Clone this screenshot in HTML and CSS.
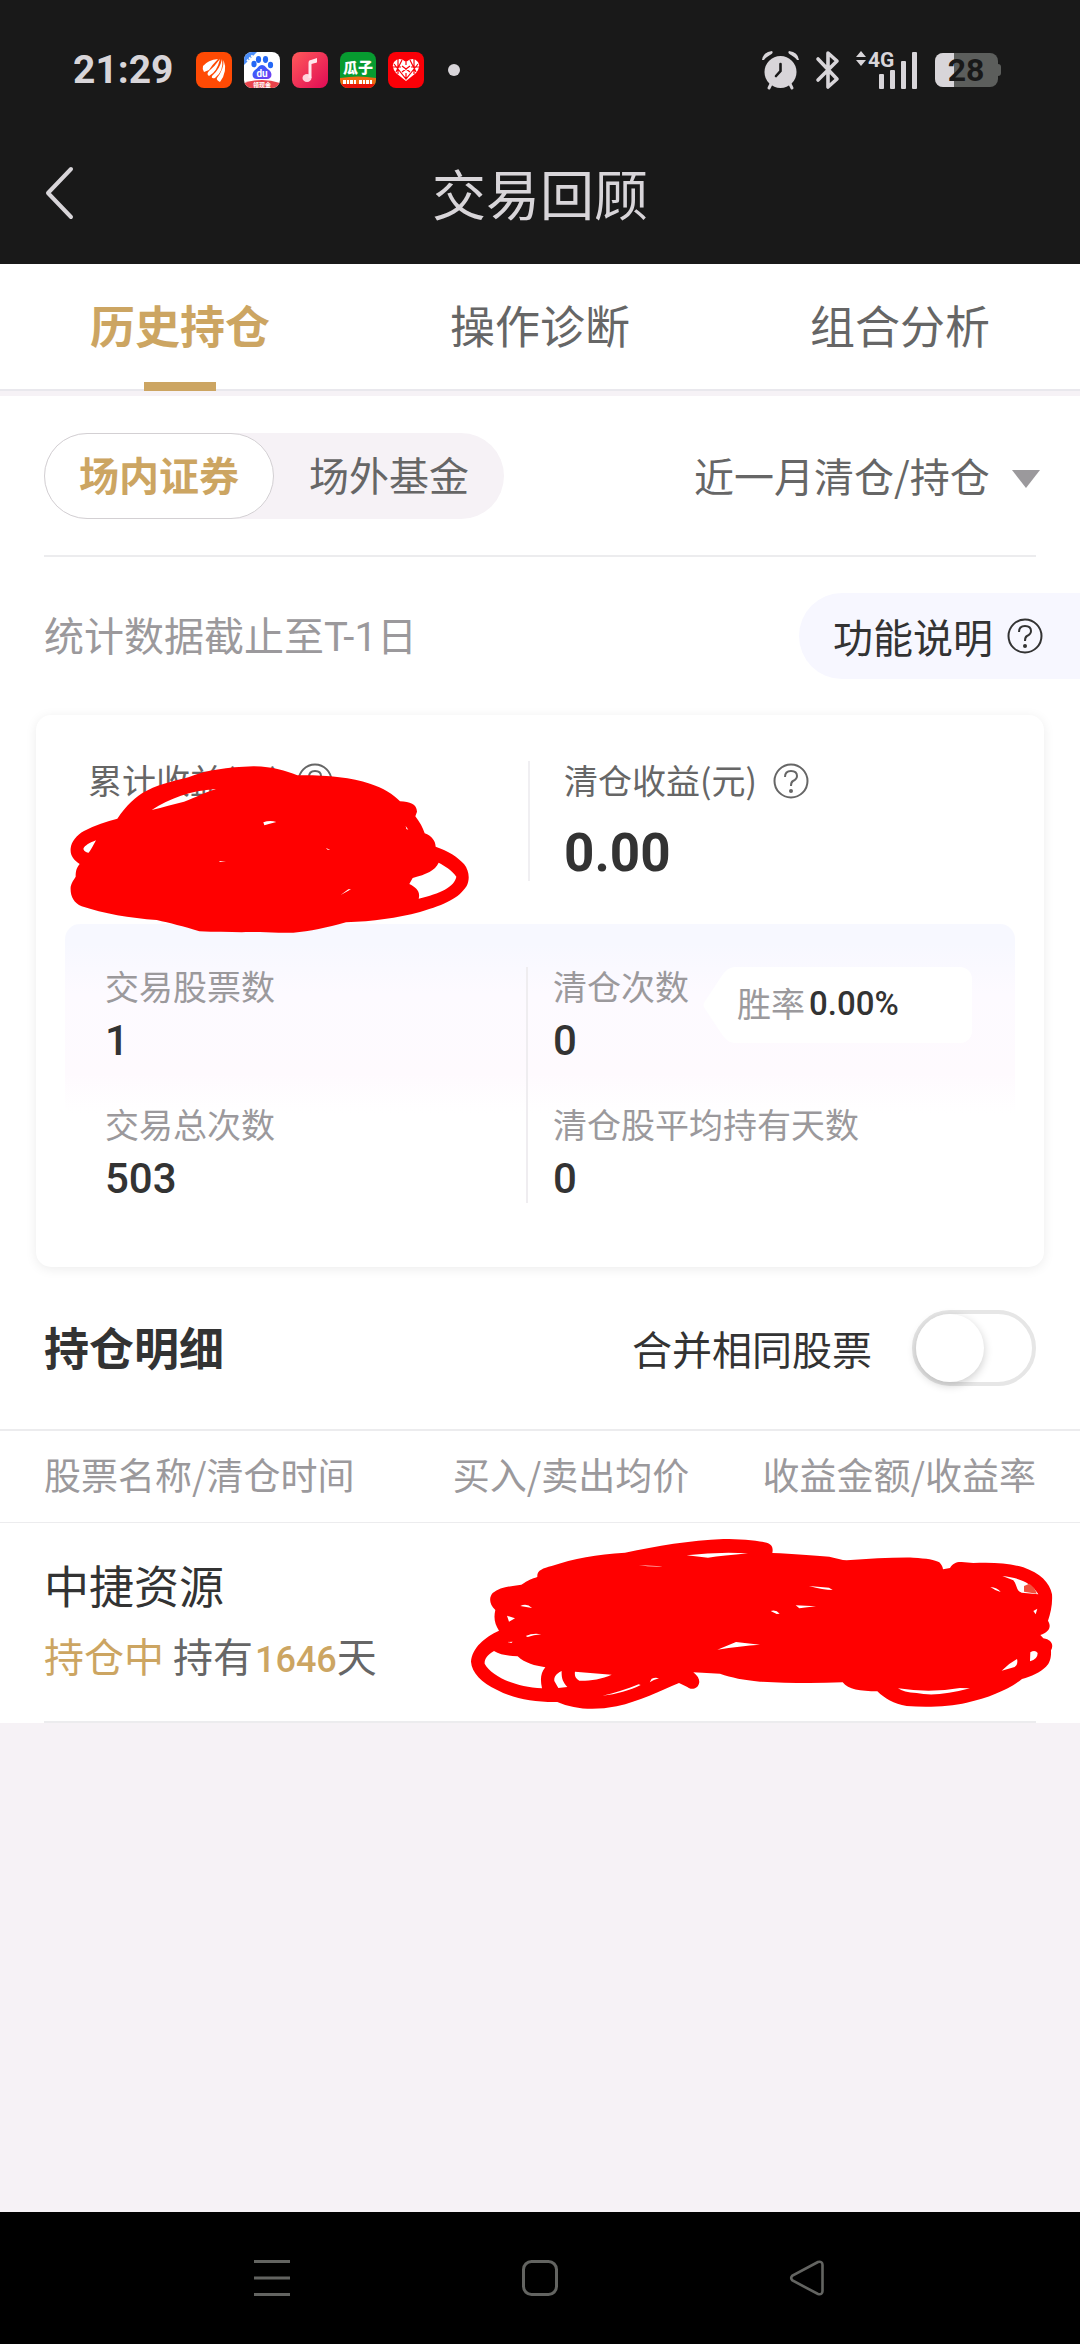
FILE: index.html
```html
<!DOCTYPE html>
<html lang="zh-CN">
<head>
<meta charset="utf-8">
<meta name="viewport" content="width=device-width, initial-scale=1">
<title>交易回顾</title>
<link rel="stylesheet" href="styles.css">
</head>
<body>
<div class="app">
  <header class="header">
    <div class="status">
      <span class="clock">21:29</span>
      <div class="apps">
        <svg class="app-icon" viewBox="0 0 36 36"><rect width="36" height="36" rx="8" fill="#ff4a04"/><g fill="#fff"><path d="M7 14Q12 8 22 7Q16 13 13 18L8 20Q6 17 7 14Z"/><path d="M24 7Q21 20 13 24Q10 22 13 19Q19 14 24 7Z"/><path d="M26 7Q28 19 19 26Q15 27 16 24Q24 17 26 7Z"/><path d="M27.500 8Q32 19 24 30Q20 28 21 26Q28 17 27.500 8Z"/></g></svg>
        <svg class="app-icon" viewBox="0 0 36 36"><defs><linearGradient id="paw" x1="0" y1="0" x2="1" y2="1"><stop offset="0" stop-color="#1f6bff"/><stop offset="1" stop-color="#7a3bf0"/></linearGradient><clipPath id="tile"><rect width="36" height="36" rx="8"/></clipPath></defs><g clip-path="url(#tile)"><rect width="36" height="36" fill="#fff"/><path d="M0 0H13L0 13Z" fill="#4a8df8"/><path d="M3 9L9 3" stroke="#fff" stroke-width="2" stroke-dasharray="2 1"/><g fill="#2468f5"><ellipse cx="10" cy="12" rx="2.600" ry="3.300"/><ellipse cx="14.500" cy="7.500" rx="2.600" ry="3.400"/><ellipse cx="21.500" cy="7.500" rx="2.600" ry="3.400"/><ellipse cx="26.500" cy="13" rx="2.600" ry="3.300"/></g><path d="M18 13C21 13 22 16 25 18C29 21 28 27 23 27H13C8 27 7 21 11 18C14 16 15 13 18 13Z" fill="url(#paw)"/><text x="18" y="25" font-family="Roboto, sans-serif" font-size="10" font-weight="700" fill="#fff" text-anchor="middle">du</text><path d="M0 31Q18 25 36 31V36H0Z" fill="#e9434b"/><text x="18" y="35" font-family="Noto Sans CJK SC, sans-serif" font-size="6" font-weight="700" fill="#fff" text-anchor="middle">领现金</text></g></svg>
        <svg class="app-icon" viewBox="0 0 36 36"><defs><linearGradient id="music" x1="0" y1="0" x2="1" y2="1"><stop offset="0" stop-color="#ff5a5a"/><stop offset="1" stop-color="#e00a55"/></linearGradient></defs><rect width="36" height="36" rx="8" fill="url(#music)"/><ellipse cx="15" cy="26" rx="4.500" ry="4" fill="#ffd3dc"/><path d="M16.500 26V11Q16.500 8 19 8L25 6V10Q25 11 23 11L19.500 12V26Z" fill="#ffe6ec"/></svg>
        <svg class="app-icon" viewBox="0 0 36 36"><g clip-path="url(#tile)"><rect width="36" height="36" fill="#079b30"/><path d="M0 26Q18 23 36 26V36H0Z" fill="#f06a12"/><path d="M0 32H36V36H0Z" fill="#e8140c"/><text x="18" y="21" font-family="Noto Sans CJK SC, sans-serif" font-size="15" font-weight="900" fill="#fff" text-anchor="middle">瓜子</text><path d="M3 30H17M19 30H33" stroke="#fff" stroke-width="4" stroke-dasharray="3 1 2 1"/></g></svg>
        <svg class="app-icon" viewBox="0 0 36 36"><rect width="36" height="36" rx="8" fill="#fb0007"/><path d="M18 29L8 21Q3 15 6 10Q11 4 18 10Q25 4 30 10Q33 15 28 21Z" fill="#fff"/><path d="M6 12L18 27L30 12M5 15H13M23 15H31M10 7V22M26 7V22M14 8L8 20M22 8L28 20M14 14L22 20M22 14L14 20M18 10V13M18 21V28" fill="none" stroke="#fb0007" stroke-width="1.200"/></svg>
      </div>
      <span class="more-dot"></span>
      <div class="system">
        <svg width="37" height="38" viewBox="0 0 37 38"><g fill="#d8d5d9"><circle cx="18.500" cy="21" r="16"/><path d="M0 9Q1 1 10 0Q12 2 8 4Q3 7 2 9ZM37 9Q36 1 27 0Q25 2 29 4Q34 7 35 9Z"/></g><path d="M9 33L7 37M28 33L30 37" stroke="#d8d5d9" stroke-width="3" stroke-linecap="round"/><path d="M18.500 13V20L14 25" fill="none" stroke="#191919" stroke-width="2.600" stroke-linecap="round"/></svg>
        <svg width="23" height="38" viewBox="0 0 23 38"><path d="M2 8L21 28L12 36V2L21 10L2 29" fill="none" stroke="#d8d5d9" stroke-width="3.600" stroke-linecap="round" stroke-linejoin="round"/></svg>
        <svg width="62" height="38" viewBox="0 0 62 38"><g fill="#d8d5d9"><path d="M0 6L5 0L10 6ZM0 9H10L5 15Z"/><rect x="23" y="23" width="5" height="15" rx="1"/><rect x="34" y="19" width="5" height="19" rx="1"/><rect x="45" y="10" width="5" height="28" rx="1"/><rect x="56" y="1" width="5" height="37" rx="1"/><text x="12" y="16" font-family="Roboto, sans-serif" font-size="21" font-weight="700">4G</text></g></svg>
        <svg width="67" height="34" viewBox="0 0 67 34"><defs><clipPath id="cell"><rect width="63" height="34" rx="8"/></clipPath></defs><g clip-path="url(#cell)"><rect width="63" height="34" fill="#5c5e5c"/><rect width="19" height="34" fill="#d8d5d9"/></g><path d="M63 11Q66 11 66 14V20Q66 23 63 23Z" fill="#5c5e5c"/><text x="31" y="28" font-family="Roboto, sans-serif" font-size="32" font-weight="700" fill="#191919" text-anchor="middle">28</text></svg>
      </div>
    </div>
    <div class="titlebar">
      <button class="back" type="button" aria-label="返回"><svg width="30" height="52" viewBox="0 0 30 52"><path d="M26 2L3 26L26 50" fill="none" stroke="#d8d5d9" stroke-width="4" stroke-linecap="round" stroke-linejoin="round"/></svg></button>
      <h1 class="title">交易回顾</h1>
    </div>
  </header>

  <nav class="tabs">
    <a class="tab tab-active" href="#history">历史持仓</a>
    <a class="tab" href="#diagnose">操作诊断</a>
    <a class="tab" href="#portfolio">组合分析</a>
  </nav>

  <main class="main" id="history">
    <section class="sheet">
      <div class="filters">
        <div class="segmented">
          <button class="segment segment-active" type="button">场内证券</button>
          <button class="segment" type="button">场外基金</button>
        </div>
        <div class="period">
          <select class="period-select" aria-label="统计区间"><option>近一月清仓/持仓</option></select>
          <svg class="caret" width="28" height="18" viewBox="0 0 28 18"><path d="M0 0H28L14 18Z" fill="#9b999c"/></svg>
        </div>
      </div>
      <hr class="divider">

      <div class="notice">
        <p class="notice-text">统计数据截止至<span class="latin">T-1</span>日</p>
        <button class="guide" type="button">功能说明
          <svg class="help" viewBox="0 0 36 36"><circle cx="18" cy="18" r="16.500"/><path d="M12 14Q12 8 18 8Q24 8 24 13Q24 16 20 18Q18 19 18 23"/><circle class="help-dot" cx="18" cy="28" r="2"/></svg>
        </button>
      </div>

      <section class="card">
        <div class="metrics">
          <div class="metric">
            <div class="metric-label"><span class="metric-name">累计收益(元)</span>
              <svg class="help" viewBox="0 0 36 36"><circle cx="18" cy="18" r="16.500"/><path d="M12 14Q12 8 18 8Q24 8 24 13Q24 16 20 18Q18 19 18 23"/><circle class="help-dot" cx="18" cy="28" r="2"/></svg>
            </div>
            <svg class="scribble scribble-profit" viewBox="0 0 1260 600"><path fill="#f00" fill-rule="evenodd" d="M172 206C200 165 225 140 260 122C310 98 350 92 385 82C440 60 500 52 580 49C640 50 675 62 712 76C800 75 870 82 930 101C970 114 1000 132 1020 154C1050 155 1070 162 1071 185L1066 199C1080 218 1088 232 1094 250C1115 258 1126 272 1127 290C1165 303 1192 320 1212 342C1228 362 1230 388 1220 408C1195 445 1160 462 1080 486C1010 504 940 514 858 517C800 533 750 545 700 548C660 550 630 546 600 546C560 547 490 547 418 544C370 529 330 519 290 510C210 505 130 491 65 469C40 459 30 437 32 410C34 398 42 388 47 380C47 360 51 352 59 342C40 330 30 316 32 295C34 275 50 255 72 243C105 225 140 214 172 206ZM275 180C330 145 390 122 468 117C430 128 410 142 372 155C340 163 310 171 275 180ZM108 271C90 278 74 286 70 297C73 305 80 308 86 308C94 299 100 285 108 271ZM610 217Q630 210 649 216Q633 220 613 226ZM1136 338C1155 348 1175 360 1189 380C1184 410 1140 431 1076 446C1082 424 1068 412 1048 402L1058 384C1100 372 1125 362 1136 338ZM1037 228L1045 239L1039 237ZM477 333L498 335L480 336ZM797 294L811 299L803 299ZM842 435L865 418L873 418Z"/></svg>
          </div>
          <div class="metric metric-split">
            <div class="metric-label"><span class="metric-name">清仓收益(元)</span>
              <svg class="help" viewBox="0 0 36 36"><circle cx="18" cy="18" r="16.500"/><path d="M12 14Q12 8 18 8Q24 8 24 13Q24 16 20 18Q18 19 18 23"/><circle class="help-dot" cx="18" cy="28" r="2"/></svg>
            </div>
            <div class="metric-value">0.00</div>
          </div>
        </div>

        <div class="panel">
          <div class="stats">
            <div class="stat"><span class="stat-label">交易股票数</span><span class="stat-value">1</span></div>
            <div class="stat"><span class="stat-label">交易总次数</span><span class="stat-value">503</span></div>
          </div>
          <div class="stats stats-split">
            <div class="stat-row">
              <div class="stat"><span class="stat-label">清仓次数</span><span class="stat-value">0</span></div>
              <div class="rate">
                <svg class="rate-tip" width="34" height="76" viewBox="0 0 34 76"><path d="M34 0C22 0 20 8 14 16L2 34Q-1 38 2 42L14 60C20 68 22 76 34 76Z" fill="#fff"/></svg>
                <div class="rate-body"><span class="stat-label">胜率</span><span class="rate-value">0.00%</span></div>
              </div>
            </div>
            <div class="stat"><span class="stat-label">清仓股平均持有天数</span><span class="stat-value">0</span></div>
          </div>
        </div>
      </section>

      <div class="section-head">
        <h2 class="section-title">持仓明细</h2>
        <label class="merge" for="merge">合并相同股票
          <input class="switch" id="merge" type="checkbox" role="switch">
        </label>
      </div>

      <table class="holdings">
        <thead>
          <tr><th class="col-name">股票名称/清仓时间</th><th class="col-price">买入/卖出均价</th><th class="col-profit">收益金额/收益率</th></tr>
        </thead>
        <tbody>
          <tr>
            <td class="stock">
              <div class="stock-name">中捷资源</div>
              <div class="stock-meta"><span class="gold">持仓中</span> 持有<span class="gold days">1646</span>天</div>
            </td>
            <td class="hidden-values" colspan="2">
              <svg class="scribble scribble-row" viewBox="0 0 1800 570"><path fill="#f00" fill-rule="evenodd" d="M232 138C230 118 248 112 275 105C340 82 410 70 495 65C590 45 690 28 790 24C840 24 890 28 920 35C936 40 940 50 937 66C1000 68 1060 74 1108 77C1130 82 1145 87 1160 88C1230 83 1300 79 1360 80C1400 82 1425 86 1438 94C1446 102 1448 108 1449 115L1470 111C1478 97 1490 92 1505 93L1540 96C1600 93 1650 97 1690 109C1740 127 1770 155 1776 190C1778 220 1772 245 1764 269C1775 288 1768 302 1741 312L1750 322C1775 326 1782 342 1773 358C1774 380 1770 395 1758 407C1740 424 1715 436 1686 444C1650 473 1590 500 1520 515C1470 527 1400 530 1340 525C1300 518 1275 503 1252 481C1200 481 1165 476 1148 454C1060 458 970 456 900 452C850 447 815 440 780 428L700 424C720 440 722 455 712 467C700 476 690 475 682 468L657 456C600 480 540 510 470 526C400 540 340 534 292 513C220 514 160 503 110 476C65 455 35 425 33 392C36 350 75 318 117 299C105 280 100 262 106 237C88 220 86 200 98 186C120 168 150 166 184 161C205 148 215 143 232 138ZM102 360C80 372 73 387 74 398C95 435 160 467 246 472C240 445 242 425 256 409C225 404 195 397 173 376C145 374 120 372 102 360ZM305 420C285 430 282 440 283 450L295 471L322 468C307 452 304 438 305 420ZM345 422L455 431C425 445 385 450 358 449C347 443 343 436 345 422ZM427 494C470 490 510 478 542 462L536 460C500 475 465 486 427 494ZM569 454L575 443Q587 438 597 442Q580 447 569 454ZM141 254L165 262L147 272ZM181 225Q200 215 216 231ZM197 315Q220 305 244 310Q220 312 203 318ZM143 333L158 332L154 336ZM680 73Q770 62 864 67Q790 74 744 80ZM536 103L608 106Q575 108 536 103ZM772 356L828 333L900 341Q840 345 772 356ZM828 254L862 256ZM932 240Q948 235 959 248L950 249ZM1007 223L1068 226Q1040 229 1018 232ZM1047 165L1107 170L1118 177Q1090 177 1047 165ZM1591 168Q1612 170 1622 183Q1606 179 1591 168ZM1627 135C1675 140 1715 155 1735 190L1685 185C1668 180 1671 160 1660 148ZM1720 240L1732 233L1727 250ZM1711 364Q1725 355 1733 366Q1733 385 1710 391ZM1625 419Q1645 398 1671 384Q1675 400 1664 408ZM1314 472Q1410 487 1500 471L1530 472Q1430 499 1370 486Q1330 484 1314 472Z"/><path fill="#f0503c" d="M1692 165L1708 158Q1724 168 1730 188L1692 182Z"/></svg>
            </td>
          </tr>
        </tbody>
      </table>
      <hr class="divider">
    </section>
  </main>

  <nav class="system-nav">
    <button class="nav-button" type="button" aria-label="菜单"><svg width="36" height="36" viewBox="0 0 36 36"><path d="M0 1.500H36M0 18H36M0 34.500H36" stroke="#636461" stroke-width="3"/></svg></button>
    <button class="nav-button" type="button" aria-label="主页"><svg width="36" height="36" viewBox="0 0 36 36"><rect x="1.500" y="1.500" width="33" height="33" rx="8" fill="none" stroke="#636461" stroke-width="3"/></svg></button>
    <button class="nav-button" type="button" aria-label="返回上一页"><svg width="36" height="36" viewBox="0 0 36 36"><path d="M28 2L2.500 15.500Q0 18 2.500 20.500L28 34Q32.500 35 32.500 31V5Q32.500 1 28 2Z" fill="none" stroke="#636461" stroke-width="2.600"/></svg></button>
  </nav>
</div>
</body>
</html>
```

FILE: styles.css
```css
* {
  box-sizing: border-box;
}

body,
h1,
h2,
p {
  margin: 0;
}

body {
  font-family: "Noto Sans CJK SC", sans-serif;
  font-size: 40px;
  color: #333;
  background: #f6f2f6;
}

button,
select {
  margin: 0;
  padding: 0;
  border: 0;
  background: none;
  color: inherit;
  font: inherit;
}

svg {
  display: block;
  flex: none;
  overflow: visible;
}

a {
  color: inherit;
  text-decoration: none;
}

.app {
  display: flex;
  flex-direction: column;
  min-height: 100vh;
}

/* Header */

.header {
  background: #191919;
  color: #d8d5d9;
  padding-bottom: 18px;
}

.status {
  display: flex;
  align-items: center;
  height: 140px;
  padding: 0 78px 0 73px;
}

.clock {
  width: 102px;
  font-family: Roboto, sans-serif;
  font-size: 39px;
  font-weight: 700;
}

.apps {
  display: flex;
  gap: 12px;
  margin-left: 21px;
}

.app-icon {
  width: 36px;
  height: 36px;
}

.more-dot {
  width: 12px;
  height: 12px;
  margin-left: 24px;
  border-radius: 50%;
  background: #d8d5d9;
}

.system {
  display: flex;
  align-items: center;
  gap: 17px;
  margin-left: auto;
}

.titlebar {
  display: grid;
  grid-template-columns: 120px 1fr 120px;
  align-items: center;
  height: 106px;
}

.back {
  padding-left: 45px;
}

.title {
  font-size: 54px;
  font-weight: 400;
  line-height: 80px;
  text-align: center;
}

/* Tabs */

.tabs {
  display: grid;
  grid-template-columns: repeat(3, 1fr);
  border-bottom: 2px solid #e9e8ed;
  background: #fff;
  color: #666;
  font-size: 45px;
  line-height: 121px;
  text-align: center;
}

.tab {
  position: relative;
  padding-bottom: 4px;
}

.tab-active {
  color: #cca562;
  font-weight: 700;
}

.tab-active::after {
  content: "";
  position: absolute;
  bottom: -2px;
  left: 40%;
  width: 20%;
  height: 9px;
  background: #cca562;
}

/* Content */

.main {
  flex: 1;
  padding-top: 5px;
}

.sheet {
  background: #fff;
}

.filters {
  display: flex;
  align-items: center;
  justify-content: space-between;
  padding: 37px 40px 36px 44px;
  color: #666;
}

.segmented {
  display: flex;
  border-radius: 43px;
  background: #f6f2f6;
}

.segment {
  width: 230px;
  height: 86px;
  padding-bottom: 4px;
  border-radius: 43px;
}

.segment-active {
  border: 1px solid #d3d0d3;
  background: #fff;
  color: #cca562;
  font-weight: 700;
}

.period {
  display: grid;
  align-items: center;
}

.period-select,
.caret {
  grid-area: 1 / 1;
}

.period-select {
  appearance: none;
  height: 60px;
  padding: 0 50px 4px 0;
}

.caret {
  justify-self: end;
  margin-top: 6px;
  pointer-events: none;
}

.divider {
  height: 2px;
  margin: 0 44px;
  border: 0;
  background: #ececee;
}

.notice {
  display: flex;
  align-items: center;
  justify-content: space-between;
  padding: 36px 0 36px 44px;
}

.notice-text {
  padding-bottom: 4px;
  color: #9b999c;
}

.latin {
  font-family: Roboto, sans-serif;
}

.guide {
  display: flex;
  align-items: center;
  gap: 14px;
  height: 86px;
  padding: 0 37px 0 34px;
  border-radius: 43px 0 0 43px;
  background: #f7f7ff;
}

.help {
  width: 36px;
  height: 36px;
  fill: none;
  stroke: currentColor;
  stroke-width: 2;
}

.help-dot {
  fill: currentColor;
  stroke: none;
}

/* Summary card */

.card {
  margin: 0 36px;
  padding-bottom: 41px;
  border-radius: 15px;
  background: #fff;
  box-shadow: 0 2px 12px rgba(0, 0, 0, 0.08);
}

.metrics {
  display: grid;
  grid-template-columns: 492fr 516fr;
  padding: 46px 0 43px;
}

.metric {
  position: relative;
  height: 120px;
  padding-left: 52px;
}

.metric-split {
  padding-left: 34px;
  border-left: 2px solid #f0eff2;
}

.metric-label {
  display: flex;
  align-items: center;
  gap: 16px;
  height: 40px;
  color: #666;
  font-size: 34px;
}

.metric-name {
  padding-bottom: 4px;
}

.metric-value {
  margin-top: 22px;
  font-family: Roboto, sans-serif;
  font-size: 53px;
  font-weight: 700;
  line-height: 60px;
}

/* Hand-drawn marks lie over the private figures */
.scribble {
  position: absolute;
}

.scribble-profit {
  top: -11px;
  left: 24px;
  width: 420px;
  height: 200px;
}

.panel {
  display: grid;
  grid-template-columns: 461fr 489fr;
  margin: 0 29px;
  padding: 43px 0 23px;
  border-radius: 15px;
  background: linear-gradient(#f7f8ff 0, #f7f8ff 20px, #fdfaff 70px, #fefafe 150px, #fff 190px);
}

.stats {
  display: flex;
  flex-direction: column;
  gap: 40px;
  padding-left: 40px;
}

.stats-split {
  padding: 0 43px 0 25px;
  border-left: 2px solid #efedf0;
}

.stat {
  display: flex;
  flex-direction: column;
  gap: 12px;
}

.stat-label {
  color: #9b999c;
  font-size: 34px;
  line-height: 38px;
}

.stat-value {
  font-family: Roboto, sans-serif;
  font-size: 42px;
  font-weight: 500;
  line-height: 48px;
}

.stat-row {
  display: flex;
  align-items: flex-start;
  gap: 14px;
  height: 98px;
}

.rate {
  display: flex;
  flex: 1;
}

.rate-body {
  display: flex;
  flex: 1;
  align-items: center;
  gap: 4px;
  height: 76px;
  padding-bottom: 4px;
  border-radius: 0 12px 12px 0;
  background: #fff;
}

.rate-value {
  font-family: Roboto, sans-serif;
  font-size: 33px;
  font-weight: 500;
}

/* Holdings */

.section-head {
  display: flex;
  align-items: center;
  justify-content: space-between;
  height: 162px;
  padding: 0 44px;
}

.section-title {
  padding-bottom: 4px;
  font-size: 45px;
}

.merge {
  display: flex;
  align-items: center;
  gap: 40px;
}

.switch {
  appearance: none;
  width: 124px;
  height: 76px;
  margin: 0;
  border: 4px solid #e6e6e6;
  border-radius: 38px;
  background: #fff;
}

.switch::before {
  content: "";
  display: block;
  width: 68px;
  height: 68px;
  border-radius: 50%;
  background: #fff;
  box-shadow: 0 3px 10px rgba(0, 0, 0, 0.2);
}

.switch:checked::before {
  margin-left: auto;
}

.holdings {
  width: 100%;
  border-collapse: collapse;
  table-layout: fixed;
}

.holdings th {
  height: 92px;
  padding: 0 0 4px;
  border-top: 2px solid #ececee;
  border-bottom: 1px solid #ececee;
  color: #9b999c;
  font-size: 37px;
  font-weight: 400;
  line-height: 54px;
  text-align: right;
  white-space: nowrap;
}

.holdings .col-name {
  width: 36%;
  padding-left: 44px;
  text-align: left;
}

.holdings .col-price {
  width: 28%;
  padding-right: 2px;
}

.holdings .col-profit {
  padding-right: 44px;
}

.stock {
  padding: 32px 0 41px 44px;
  white-space: nowrap;
}

.stock-name {
  font-size: 45px;
  line-height: 60px;
}

.stock-meta {
  height: 50px;
  margin-top: 15px;
  color: #666;
  line-height: 50px;
}

.gold {
  color: #cca562;
}

.days {
  padding-left: 2px;
  font-family: Roboto, sans-serif;
  font-size: 36px;
  font-weight: 500;
  line-height: 36px;
}

.hidden-values {
  position: relative;
  padding: 0;
}

.scribble-row {
  top: 8px;
  right: 20px;
  width: 600px;
  height: 190px;
}

/* System navigation */

.system-nav {
  display: flex;
  align-items: center;
  justify-content: center;
  gap: 196px;
  height: 132px;
  background: #000;
}

.nav-button {
  padding: 18px;
}
```
